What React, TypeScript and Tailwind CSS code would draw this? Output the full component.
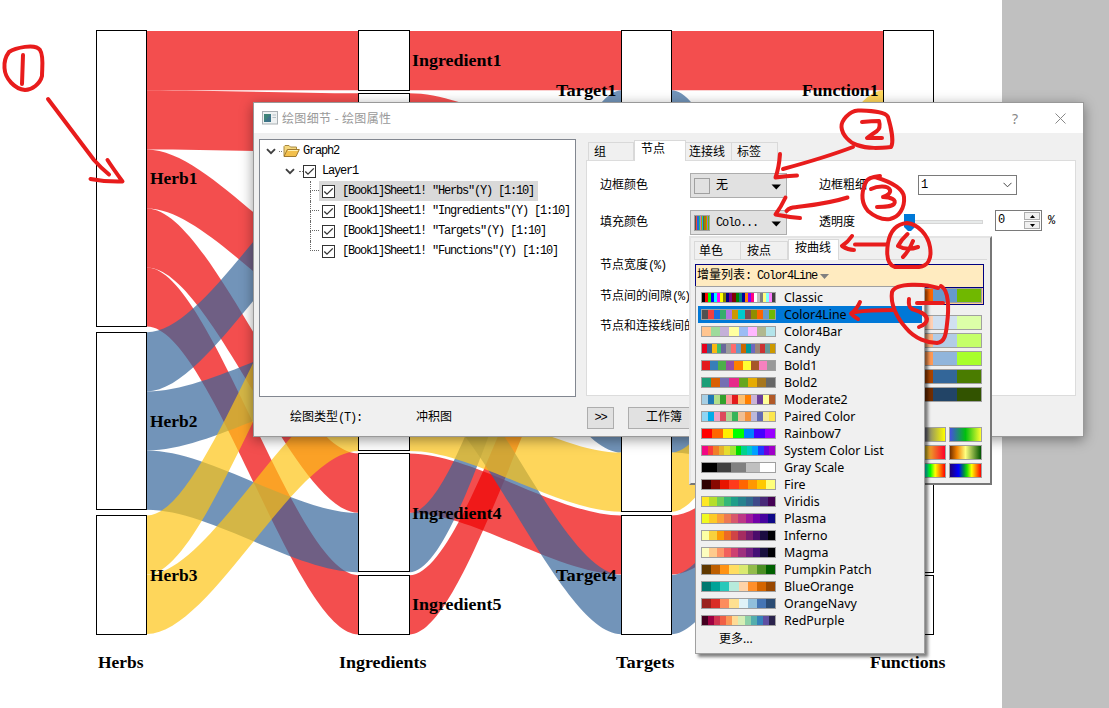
import React from "react";

const RED = "#ee0303";
const BLUE = "#36669b";
const YELLOW = "#fec416";
const UNIT = 59.2;

type Link = { x0: number; x1: number; y0: number; y1: number; color: string };

const A: [number, number] = [147, 358.5];
const B: [number, number] = [409.5, 621.5];
const C: [number, number] = [671.5, 883.5];

const link = (c: [number, number], y0: number, y1: number, color: string): Link => ({
  x0: c[0],
  x1: c[1],
  y0,
  y1,
  color,
});

const links: Link[] = [
  link(A, 31, 31, RED),
  link(A, 90.2, 93.3, RED),
  link(A, 149.4, 273.8, RED),
  link(A, 208.4, 453.6, RED),
  link(A, 267.4, 575.2, RED),
  link(A, 332.2, 152.5, BLUE),
  link(A, 391.4, 333, BLUE),
  link(A, 450.6, 513, BLUE),
  link(A, 515.4, 211.7, YELLOW),
  link(A, 574.8, 391.8, YELLOW),
  link(B, 31, 31, RED),
  link(B, 93.3, 153.2, RED),
  link(B, 273.8, 334, RED),
  link(B, 453.6, 515.4, RED),
  link(B, 575.2, 212.4, RED),
  link(B, 152.5, 393.4, BLUE),
  link(B, 333, 575, BLUE),
  link(B, 513, 90.2, BLUE),
  link(B, 211.7, 271.6, YELLOW),
  link(B, 391.8, 452.6, YELLOW),
  link(C, 31, 31, RED),
  link(C, 515.4, 333, RED),
  link(C, 90.2, 513, BLUE),
  link(C, 393.4, 453, BLUE),
  link(C, 575, 273, BLUE),
  link(C, 452.6, 90.2, YELLOW),
];

function ribbon({ x0, x1, y0, y1 }: Link) {
  const a = x0 + (x1 - x0) * 0.3;
  const b = x0 + (x1 - x0) * 0.7;
  return `M${x0} ${y0}C${a} ${y0} ${b} ${y1} ${x1} ${y1}V${y1 + UNIT}C${b} ${y1 + UNIT} ${a} ${y0 + UNIT} ${x0} ${y0 + UNIT}Z`;
}

const nodes: number[][] = [
  [96.5, 30.5, 326.5, 50],
  [96.5, 332.5, 509.5, 50],
  [96.5, 515.5, 634.5, 50],
  [358.5, 30.5, 90.5, 51],
  [358.5, 93.5, 270.5, 51],
  [358.5, 273.5, 450.5, 51],
  [358.5, 453.5, 571.5, 51],
  [358.5, 575.5, 634.5, 51],
  [621.5, 30.5, 149.5, 50],
  [621.5, 153.5, 330.5, 50],
  [621.5, 334.5, 511.5, 50],
  [621.5, 515.5, 634.5, 50],
  [883.5, 30.5, 149.5, 50],
  [883.5, 453.5, 572.5, 50],
  [883.5, 575.5, 634.5, 50],
];

const labels: [string, number, number, number][] = [
  ["Herb1", 150, 184, 47.5],
  ["Herb2", 150, 427, 47.5],
  ["Herb3", 150, 581, 47.5],
  ["Ingredient1", 412, 66, 89.5],
  ["Ingredient4", 412, 519, 89.5],
  ["Ingredient5", 412, 610, 89.5],
  ["Target1", 556, 96, 60.5],
  ["Target4", 556, 581, 60.5],
  ["Function1", 802, 96, 76.5],
  ["Herbs", 98, 668, 45.5],
  ["Ingredients", 339, 668, 87.5],
  ["Targets", 616, 668, 58.5],
  ["Functions", 870, 668, 75.5],
];

function AlluvialChart() {
  return (
    <svg className="block shrink-0" width="1002" height="708" viewBox="0 0 1002 708">
      {links.map((l, i) => (
        <path key={i} d={ribbon(l)} fill={l.color} fillOpacity="0.7" />
      ))}
      {nodes.map(([x, y0, y1, w], i) => (
        <rect key={i} x={x} y={y0} width={w} height={y1 - y0} fill="#fff" stroke="#000" shapeRendering="crispEdges" />
      ))}
      {labels.map(([t, x, y, w]) => (
        <text key={t} x={x} y={y} textLength={w} lengthAdjust="spacingAndGlyphs" fontSize="17" fontWeight="700" fontFamily="'Liberation Serif', serif">
          {t}
        </text>
      ))}
    </svg>
  );
}

const palettes: [string, string][] = [
  ["Classic", "000 f00 0f0 00f 0ff f0f ff0 808000 000080 800080 800000 008000 008080 0000a0 ff8000 8000ff ff0080 fff c0c0c0 808080 ffff80 80ffff ff80ff 404040"],
  ["Color4Line", "515151 f14040 1a6fdf 37ad6b b177de cc9900 00cbcc 7d4e4e 8e8e00 fb6501 6699cc 6fb802"],
  ["Color4Bar", "ffc48f 9edb9c c4b0d8 ffffa0 9cbcf4 ffb8ff b0b890 b4e4ea"],
  ["Candy", "e8001c 3b6291 f9b813 3fc06a 6a689b 9c9c9c ff6b6b 6699cc cc6600 009999 6d68c0 9e8576 cc3333 669999 cc9900"],
  ["Bold1", "e41a1c 377eb8 4daf4a 984ea3 ff7f00 ffff33 a65628 f781bf 999999"],
  ["Bold2", "1b9e77 d95f02 7570b3 e7298a 66a61e e6ab02 a6761d 666666"],
  ["Moderate2", "a6cee3 1f78b4 b2df8a 33a02c fb9a99 e31a1c fdbf6f ff7f00 cab2d6 6a3d9a ffff99 b15928"],
  ["Paired Color", "8fd5f3 00abe8 eda2c5 dd4a5c aed494 36b459 f0bf93 f5913a bcb8da 646cb3 f6ec98 fce64d"],
  ["Rainbow7", "f00 f60 ffee00 0f0 0080ff 4400ff 9900ff"],
  ["System Color List", "f00884 fb3c3c f07f28 e6b02e e5dc30 a0e633 00dc00 00d28c 00c8c8 00a0ff 1e3cff 6e00dc a000c8"],
  ["Gray Scale", "000 404040 808080 c0c0c0 fff"],
  ["Fire", "300000 880900 e81500 ff3a1c ff6600 ff9800 ffc800 ffff7a"],
  ["Viridis", "fde725 b5de2b 6ece58 35b779 1f9e89 26828e 31688e 3e4989 482878 440154"],
  ["Plasma", "f0f921 fdca26 fb9f3a ed7953 d8576b bd3786 9c179e 7201a8 46039f 0d0887"],
  ["Inferno", "fcffa4 f7d13d fb9b06 ed6925 cf4446 a52c60 781c6d 4a0c6b 1b0c41 000004"],
  ["Magma", "fcfdbf feca8d fd9668 f1605d cd4071 9e2f7f 721f81 440f76 180f3d 000004"],
  ["Pumpkin Patch", "603800 bd5e00 ff9314 ffdd61 dae970 92bb4b 4b8f24 006000"],
  ["BlueOrange", "00786f 00a297 28c8ba b6ebdb fed3a8 ff8f2b d46500 984700"],
  ["OrangeNavy", "9a221d d92d26 fd8d5d fee090 e0f3f8 91bfdb 4575b4 2b4c74"],
  ["RedPurple", "430020 9e0142 d03450 f06045 fa9856 fedb96 d6eeb5 8cd0a8 54aead 3682ba 5e4fa2 2a234c"],
];

function Swatch({ colors, className }: { colors: string; className: string }) {
  return (
    <div className={"flex border border-[#a0a0a0] " + className}>
      {colors.split(" ").map((c, i) => (
        <span key={i} className="h-full flex-1" style={{ background: "#" + c }} />
      ))}
    </div>
  );
}

const SIM = "font-['Liberation_Mono','Noto_Sans_CJK_SC',monospace]";

function Latin({ children }: { children: React.ReactNode }) {
  return <span className="text-[12px] tracking-[-1.2px]">{children}</span>;
}

function Chevron() {
  return (
    <svg width="10" height="7" viewBox="0 0 10 7" className="shrink-0">
      <path d="M1 1.2 5 5.2 9 1.2" fill="none" stroke="#404040" strokeWidth="1.9" />
    </svg>
  );
}

function Check() {
  return (
    <svg width="13" height="13" viewBox="0 0 13 13" className="shrink-0">
      <rect x=".5" y=".5" width="12" height="12" fill="#fff" stroke="#333" />
      <path d="M2.3 6.5 5 9.2 10.8 3.4" fill="none" stroke="#333" strokeWidth="1.3" />
    </svg>
  );
}

function Folder() {
  return (
    <svg width="17" height="14" viewBox="0 0 17 14" className="shrink-0">
      <path d="M1 12V2.5L2 1.5H6L7.5 3H13.5V5" fill="#f5d77c" stroke="#a88a42" />
      <path d="M1 12.5 4.3 5.5H16.3L13 12.5Z" fill="#f3c04c" stroke="#a07a30" />
      <path d="M5 6.5H14.8" stroke="#fff0b0" />
    </svg>
  );
}

function Tree() {
  return (
    <div className="h-[258px] w-[317px] border border-[#828790] bg-white pt-[1px] text-[12px]">
      <div className="flex h-5 items-center pl-[6px]">
        <Chevron />
        <span className="mr-px ml-[3px] w-[3px] border-t border-dotted border-[#777]" />
        <Folder />
        <span className="ml-[3px]"><Latin>Graph2</Latin></span>
      </div>
      <div className="flex h-5 items-center pl-[25px]">
        <Chevron />
        <span className="ml-[4px] w-[4px] border-t border-dotted border-[#777]" />
        <Check />
        <span className="ml-[6px]"><Latin>Layer1</Latin></span>
      </div>
      {["Herbs", "Ingredients", "Targets", "Functions"].map((n, i) => (
        <div key={n} className="flex h-5 items-center pl-[50px]">
          <div className="flex h-full w-[9px] flex-col">
            <span className={"h-[10px] border-b border-l border-dotted border-[#666]"} />
            <span className={i < 3 ? "h-[10px] border-l border-dotted border-[#666]" : "h-[10px]"} />
          </div>
          <div className={"flex h-full items-center pr-[4px] pl-[3px] " + (i === 0 ? "bg-[#d9d9d9]" : "")}>
            <Check />
            <span className="ml-[7px] whitespace-pre">
              <Latin>{`[Book1]Sheet1! "${n}"(Y) [1:10]`}</Latin>
            </span>
          </div>
        </div>
      ))}
    </div>
  );
}

function DropButton({ children }: { children: React.ReactNode }) {
  return (
    <div className="flex h-[25px] w-[97px] items-center border border-[#adadad] bg-[#e1e1e1] pr-[4px] pl-[3px]">
      {children}
      <svg width="11" height="6" viewBox="0 0 11 6" className="mt-[3px] ml-auto shrink-0">
        <path d="M0.5 .5H10L5.3 5.5Z" fill="#000" />
      </svg>
    </div>
  );
}

function Tabs() {
  return (
    <div className="flex h-[21px] items-end">
      <div className="h-[18px] w-[46px] border border-b-0 border-[#d9d9d9] bg-[#f0f0f0] pl-[5px] leading-[20px]">组</div>
      <div className="z-10 -mb-px h-[21px] w-[52px] border border-b-0 border-[#d9d9d9] bg-white pl-[6px] leading-[18px]">节点</div>
      <div className="h-[18px] w-[46px] border border-b-0 border-l-0 border-[#d9d9d9] pl-[3px] leading-[20px]">连接线</div>
      <div className="h-[18px] w-[46px] border border-b-0 border-l-0 border-[#d9d9d9] pl-[5px] leading-[20px]">标签</div>
    </div>
  );
}

function NodeForm() {
  return (
    <div className="flex h-[236px] w-[490px] border border-[#dcdcdc] bg-white pl-[13px]">
      <div className="w-[90px] pt-[13px] whitespace-nowrap">
        <div className="h-[37px] leading-[24px]">边框颜色</div>
        <div className="h-[43px] leading-[24px]">填充颜色</div>
        <div className="h-[31px] leading-[24px]">节点宽度<Latin>(%)</Latin></div>
        <div className="h-[30px] leading-[24px]">节点间的间隙<Latin>(%)</Latin></div>
        <div className="h-[30px] leading-[24px]">节点和连接线间的间隙</div>
      </div>
      <div className="flex w-[129px] flex-col gap-[12px] pt-[12px]">
        <DropButton>
          <span className="h-4 w-4 border border-[#a0a0a0]" />
          <span className="ml-[6px]">无</span>
        </DropButton>
        <DropButton>
          <Swatch className="h-4 w-4" colors="515151 f14040 1a6fdf 37ad6b b177de cc9900 00cbcc 7d4e4e 8e8e00 fb6501 6699cc 6fb802" />
          <span className="ml-[6px]"><Latin>Colo...</Latin></span>
        </DropButton>
      </div>
      <div className="w-[85px] pt-[13px]">
        <div className="h-[37px] w-[85px] leading-[24px]">边框粗细</div>
        <div className="leading-[24px]">透明度</div>
      </div>
      <div className="w-[166px] pt-[14px]">
        <div className="ml-[14px] flex h-5 w-[99px] items-center justify-between border border-[#7a7a7a] pr-[4px] pl-[2px]">
          <Latin>1</Latin>
          <svg width="9" height="6" viewBox="0 0 9 6"><path d="M.5 .8 4.5 4.8 8.5 .8" fill="none" stroke="#444" /></svg>
        </div>
        <div className="mt-[15px] flex h-[21px] items-center">
          <svg width="81" height="21" viewBox="0 0 81 21" className="shrink-0">
            <rect x="4.5" y="10.5" width="74" height="3" fill="#e7eaea" stroke="#d6d6d6" />
            <path d="M0 4H11V17L5.5 22.5 0 17Z" fill="#0078d7" />
          </svg>
          <div className="ml-[10px] flex h-[21px] w-[47px] shrink-0 justify-between border border-[#7a7a7a] pl-[2px]">
            <span className="leading-[18px]"><Latin>0</Latin></span>
            <div className="flex w-[17px] flex-col justify-between py-px pr-px">
              <span className="flex h-[8px] items-center justify-center border border-[#adadad] bg-[#f0f0f0]">
                <svg width="5" height="3"><path d="M0 3 2.5 0 5 3Z" /></svg>
              </span>
              <span className="flex h-[8px] items-center justify-center border border-[#adadad] bg-[#f0f0f0]">
                <svg width="5" height="3"><path d="M0 0 2.5 3 5 0Z" /></svg>
              </span>
            </div>
          </div>
          <span className="ml-[6px]"><Latin>%</Latin></span>
        </div>
      </div>
    </div>
  );
}

function PlotDialog() {
  return (
    <div className={"absolute top-[102px] left-[253px] h-[335px] w-[831px] border border-[#999] bg-[#f0f0f0] text-[12px] text-black shadow-[0_3px_12px_rgba(0,0,0,0.4)] " + SIM}>
      <div className="flex h-[30px] items-center bg-white pr-[17px] pl-[8px]">
        <svg width="16" height="14" viewBox="0 0 16 14">
          <rect x=".5" y=".5" width="15" height="12.5" fill="#eef1f2" stroke="#a9afb3" />
          <rect x="2" y="3" width="7" height="8" fill="#3e8379" />
          <path d="M2 11 9 3V11Z" fill="#3d6793" opacity=".6" />
          <path d="M10.5 4H14M10.5 6.5H14" stroke="#b5bfc5" />
        </svg>
        <span className="ml-[4px] font-['Noto_Sans_CJK_SC',sans-serif] text-[12px] tracking-[0.35px] text-[#999]">绘图细节 - 绘图属性</span>
        <span className="ml-auto font-['Noto_Sans'] text-[14px] text-[#888]">?</span>
        <svg className="ml-[37px]" width="11" height="11" viewBox="0 0 11 11">
          <path d="M.5 .5 10.5 10.5M10.5 .5 .5 10.5" stroke="#888" fill="none" />
        </svg>
      </div>
      <div className="flex pt-[6px] pl-[5px]">
        <Tree />
        <div className="ml-[10px]">
          <div className="pl-[2px]"><Tabs /></div>
          <NodeForm />
        </div>
      </div>
      <div className="mt-[10px] flex h-[22px] items-center pl-[36px]">
        <span className="w-[126px]">绘图类型<Latin>(T):</Latin></span>
        <span className="w-[171px]">冲积图</span>
        <span className="flex h-[22px] w-[27px] items-center justify-center border border-[#adadad] bg-[#e1e1e1]"><Latin>&gt;&gt;</Latin></span>
        <span className="ml-[14px] flex h-[22px] w-[72px] items-center justify-center border border-[#adadad] bg-[#e1e1e1]">工作簿</span>
      </div>
    </div>
  );
}

const tints = [
  ["#ffd0b3", "#d1e0f0", "#dcffa8"],
  ["#ffb380", "#b3cce6", "#c5ff69"],
  ["#ff9955", "#91b5db", "#a8ff2b"],
  ["#a84300", "#336699", "#4a7c00"],
  ["#702d00", "#224466", "#325300"],
];

function TriBar({ c }: { c: string[] }) {
  return (
    <div className="flex h-[15px] w-[73px] border border-[#a0a0a0]">
      <span className="w-[23px]" style={{ background: c[0] }} />
      <span className="w-[24px]" style={{ background: c[1] }} />
      <span className="w-[24px]" style={{ background: c[2] }} />
    </div>
  );
}

function ColorPopup() {
  return (
    <div className={"absolute top-[236px] left-[689px] h-[249px] w-[303px] border-2 border-t-[#e4e4e4] border-r-[#777] border-b-[#777] border-l-[#e4e4e4] bg-[#f0f0f0] pt-px pl-[3px] text-[12px] " + SIM}>
      <div className="flex h-[21px] w-[293px] items-end border-b border-[#d9d9d9]">
        <div className="h-[18px] w-[47px] border border-b-0 border-[#d9d9d9] pl-[4px] leading-[20px]">单色</div>
        <div className="h-[18px] w-[47px] border border-b-0 border-l-0 border-[#d9d9d9] pl-[6px] leading-[20px]">按点</div>
        <div className="-mb-px h-[21px] w-[51px] border border-b-0 border-[#d9d9d9] bg-white pl-[6px] leading-[19px]">按曲线</div>
      </div>
      <div className="mt-[4px] ml-px h-[41px] w-[289px] border border-[#000080] bg-[#ffebc0]">
        <div className="flex h-[22px] items-center pl-px">
          <span>增量列表</span>
          <Latin>: Color4Line</Latin>
          <svg className="ml-[3px]" width="9" height="5"><path d="M0 0H9L4.5 5Z" fill="#808080" /></svg>
        </div>
        <div className="flex h-[17px] justify-end border-t border-[#000080] bg-[#ffcc90] pr-[1px]">
          <TriBar c={["#ff6600", "#6699cc", "#70b800"]} />
        </div>
      </div>
      <div className="mt-[10px] ml-[215px] flex flex-col gap-[3px]">
        {tints.map((c) => <TriBar key={c[0]} c={c} />)}
      </div>
      <div className="mt-[25px] ml-[215px] grid grid-cols-[37px_33px] gap-x-[3px] gap-y-[3px]">
        <span className="h-[15px] border border-[#a0a0a0] bg-[linear-gradient(90deg,#555_20%,#66668c_40%,#ffff00)]" />
        <span className="h-[15px] border border-[#a0a0a0] bg-[linear-gradient(90deg,#4550e0,#00c010_50%,#ffff30)]" />
        <span className="h-[15px] border border-[#a0a0a0] bg-[linear-gradient(90deg,#66c020,#e8b828_50%,#ff0028)]" />
        <span className="h-[15px] border border-[#a0a0a0] bg-[linear-gradient(90deg,#703000,#f08000_22%,#ffff80_50%,#005500)]" />
        <span className="h-[15px] border border-[#a0a0a0] bg-[linear-gradient(90deg,#00f_20%,#00ffcc_45%,#0f0_58%,#ff0_72%,#f00)]" />
        <span className="h-[15px] border border-[#a0a0a0] bg-[linear-gradient(90deg,#200070,#0000ff_28%,#009040_45%,#20e000_55%,#ffff00_70%,#ff0000)]" />
      </div>
    </div>
  );
}

function PaletteMenu() {
  return (
    <div className="absolute top-[286px] left-[695px] h-[368px] w-[230px] border border-[#a0a0a0] bg-[#f0f0f0] px-[2px] pt-[2px] font-['Noto_Sans','Noto_Sans_CJK_SC',sans-serif] text-[12.4px] text-black shadow-[3px_3px_3px_rgba(0,0,0,0.5)]">
      {palettes.map(([name, colors], i) => (
        <div key={name} className={"flex h-[17px] w-[224px] items-center pl-[3px] " + (i === 1 ? "bg-[#0078d7]" : "")}>
          <Swatch colors={colors} className="h-[11px] w-[75px]" />
          <span className="ml-[8px] leading-[17px] whitespace-nowrap">{name}</span>
        </div>
      ))}
      <div className="pt-px pl-[21px] text-[12px] leading-[18px]">更多...</div>
    </div>
  );
}

function Annotations() {
  return (
    <svg className="pointer-events-none absolute inset-0" width="1109" height="708" viewBox="0 0 1109 708" fill="none" stroke="#e81c1c" strokeWidth="4" strokeLinecap="round" strokeLinejoin="round">
      <path d="M9 52C15 48 35 43 40 50C44 56 42 68 42 76C40 84 32 90 25 90C15 89 5 79 4.500 68C4 62 6 56 9 52Z" />
      <path d="M23 55 22 84M48 99 94 160Q101 168 109 174.500M107.500 160Q112 167 122.500 181.500Q106 182 90.500 179" />
      <path d="M888 117C885 111 870 111 858 110.500C849 111 841 121 841.500 127C842 135 850 143 857 145C868 149 880 148 891 147C894 142 891 127 888 117Z" />
      <path d="M862 122Q872 121 879 121Q881 128 877 131Q871 135 867 138H882M853 147C832 155 805 163 783 169M780 154Q779 168 775.500 177.500Q786 176 797 175.500" />
      <path d="M880 176C872 177 867 178 865 184C861 194 862 204 868 211C875 217 883 220 890 219C899 217 905 208 904 197C903 187 888 181 875 177" />
      <path d="M871 189C877 186 888 185 890 190C891 193 887 196 883 197C891 197 897 200 894 204C891 207 884 207 877 207M847.500 197.500C824 205 801 206 791 208Q788 209 786.500 211M785.500 197.500Q781 207 775.500 214.500Q788 217 800 218" />
      <path d="M907 223C895 224 890 232 888 243C886 256 888 265 895 267H919C928 266 932 259 930 247C928 235 918 224 907 223Z" />
      <path d="M907.500 234Q901 240 898 246Q907 251 918 247M913 241Q909 251 903 257M887 244.500H855M852 236Q848 242 842 246Q848 250 854 250" />
      <path d="M938 288C926 284 896 282 892 292C890 304 897 318 906 328C915 339 928 343 937 343C945 342 946 334 947 324C949 309 949 290 941 286" />
      <path d="M909 299Q908 307 912 309C918 311 926 313 927 319Q927 324 919 327M917 303H943M894 310Q869 310 855 312M860 302Q857 309 851 313.500Q854 317 858 319" />
    </svg>
  );
}

export default function App() {
  return (
    <div className="relative flex h-[708px] w-[1109px] overflow-hidden bg-white">
      <AlluvialChart />
      <div className="h-full flex-1 bg-[#c0c0c0]" />
      <PlotDialog />
      <ColorPopup />
      <PaletteMenu />
      <Annotations />
    </div>
  );
}
